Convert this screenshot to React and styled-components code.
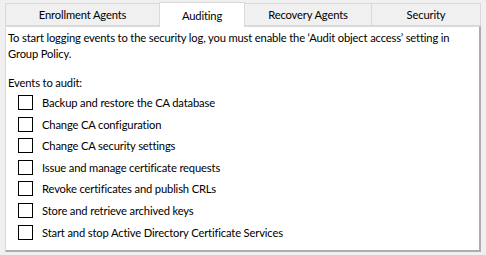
import React from "react";
import styled, { createGlobalStyle } from "styled-components";

const GlobalStyle = createGlobalStyle`
  html, body {
    margin: 0;
    padding: 0;
    background: #f0f0f0;
  }
  body {
    font-family: Lato, "Noto Sans", sans-serif;
    font-size: 11.2px;
    letter-spacing: -0.15px;
    color: #000;
  }
`

const Window = styled.div`
  width: 486px;
  height: 255px;
  padding: 1px 5px 0 5px;
  box-sizing: border-box;
  display: flex;
  flex-direction: column;
`

const TabStrip = styled.div`
  display: flex;
  align-items: flex-end;
  height: 25px;
  position: relative;
  z-index: 1;
`

const Tab = styled.div`
  box-sizing: border-box;
  width: ${p => p.$w}px;
  height: ${p => (p.$active ? 25 : 23)}px;
  margin-left: ${p => (p.$first ? 0 : -1)}px;
  background: ${p => (p.$active ? "#fff" : "#f0f0f0")};
  border: 1px solid #d9d9d9;
  border-bottom: ${p => (p.$active ? "none" : "1px solid #d9d9d9")};
  margin-bottom: ${p => (p.$active ? -1 : 0)}px;
  display: flex;
  align-items: center;
  justify-content: center;
  padding-top: ${p => (p.$active ? 1 : 0)}px;
  line-height: 1;
`

const Panel = styled.div`
  box-sizing: border-box;
  width: 476px;
  height: 226px;
  background: #fff;
  border: 1px solid #d9d9d9;
  border-right: 2px solid #adadad;
  border-bottom: 2px solid #adadad;
  padding: 3px 0 0 2px;
`

const Intro = styled.p`
  margin: 0;
  line-height: 16px;
`

const Label = styled.div`
  margin-top: 13px;
  line-height: 16px;
`

const List = styled.div`
  display: flex;
  flex-direction: column;
  gap: 6.6px;
  margin-top: 4px;
  padding-left: 10px;
`

const Row = styled.label`
  display: flex;
  align-items: center;
  gap: 9px;
  height: 15px;
`

const Box = styled.span`
  box-sizing: border-box;
  width: 15px;
  height: 15px;
  border: 1px solid #000;
  background: #fff;
  flex: none;
`

const tabs = [
  { name: "Enrollment Agents", w: 155 },
  { name: "Auditing", w: 86, active: true },
  { name: "Recovery Agents", w: 128 },
  { name: "Security", w: 110 },
]

const events = [
  "Backup and restore the CA database",
  "Change CA configuration",
  "Change CA security settings",
  "Issue and manage certificate requests",
  "Revoke certificates and publish CRLs",
  "Store and retrieve archived keys",
  "Start and stop Active Directory Certificate Services",
]

export default function App() {
  return (
    <>
      <GlobalStyle />
      <Window>
        <TabStrip>
          {tabs.map((t, i) => (
            <Tab key={t.name} $w={t.w} $active={t.active} $first={i === 0}>
              {t.name}
            </Tab>
          ))}
        </TabStrip>
        <Panel>
          <Intro>
            To start logging events to the security log, you must enable the
            ‘Audit object access’ setting in Group Policy.
          </Intro>
          <Label>Events to audit:</Label>
          <List>
            {events.map(e => (
              <Row key={e}>
                <Box />
                {e}
              </Row>
            ))}
          </List>
        </Panel>
      </Window>
    </>
  )
}
